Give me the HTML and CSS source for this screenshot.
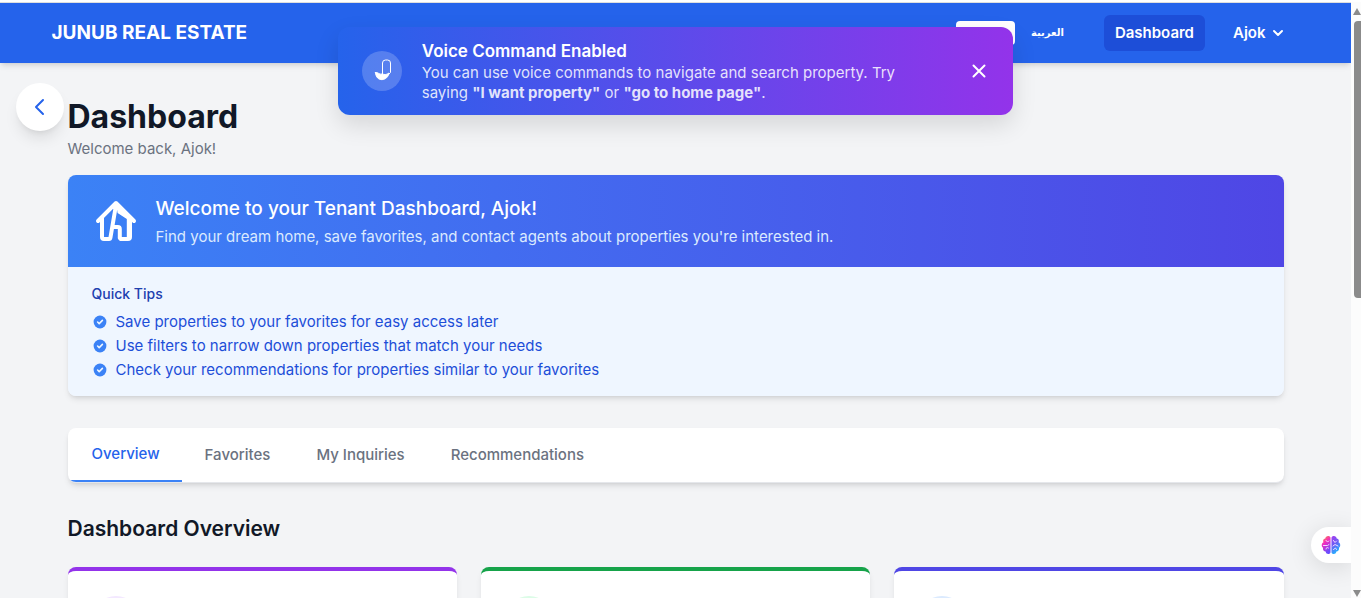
FILE: index.html
```html
<!DOCTYPE html>
<html lang="en">
<head>
<meta charset="utf-8">
<title>Junub Real Estate</title>
<link rel="stylesheet" href="styles.css">
</head>
<body>
<div class="page">
  <header class="topbar">
    <div class="topbar-inner">
      <a class="brand" href="#">JUNUB REAL ESTATE</a>
      <nav class="menu">
        <div class="languages">
          <button class="lang lang-active" type="button" aria-label="English"></button>
          <button class="lang" type="button" lang="ar">العربية</button>
        </div>
        <a class="menu-link" href="#">Dashboard</a>
        <button class="user" type="button">Ajok
          <svg class="chevron" viewBox="0 0 12 12"><path d="M2 4l4 4 4-4"/></svg>
        </button>
      </nav>
    </div>
  </header>

  <main class="content">
    <h1 class="title">Dashboard</h1>
    <p class="subtitle">Welcome back, Ajok!</p>

    <section class="welcome">
      <div class="welcome-head">
        <svg class="house" viewBox="0 0 24 24">
          <path d="M3 12l2-2 7-7 7 7 2 2M5 10v10a1 1 0 0 0 1 1h2.500a.7.7 0 0 0 .7-.6L12 4M13.900 20.500V16a1 1 0 0 0-1-1h-2M13.900 20.500l.5.5H18a1 1 0 0 0 1-1V10"/>
          <path class="house-wall" d="M12 3l9 9-2 1v7.500h-1.600v-9.500L12.800 8z"/>
        </svg>
        <div>
          <h2 class="welcome-title">Welcome to your Tenant Dashboard, Ajok!</h2>
          <p class="welcome-text">Find your dream home, save favorites, and contact agents about properties you're interested in.</p>
        </div>
      </div>
      <div class="tips">
        <h3 class="tips-title">Quick Tips</h3>
        <ul class="tips-list">
          <li><svg class="check" viewBox="0 0 20 20"><circle cx="10" cy="10" r="8"/><path d="M7 10l2 2 4-4"/></svg>Save properties to your favorites for easy access later</li>
          <li><svg class="check" viewBox="0 0 20 20"><circle cx="10" cy="10" r="8"/><path d="M7 10l2 2 4-4"/></svg>Use filters to narrow down properties that match your needs</li>
          <li><svg class="check" viewBox="0 0 20 20"><circle cx="10" cy="10" r="8"/><path d="M7 10l2 2 4-4"/></svg>Check your recommendations for properties similar to your favorites</li>
        </ul>
      </div>
    </section>

    <nav class="tabs">
      <button class="tab tab-active" type="button">Overview</button>
      <button class="tab" type="button">Favorites</button>
      <button class="tab" type="button">My Inquiries</button>
      <button class="tab" type="button">Recommendations</button>
    </nav>

    <h2 class="section-title">Dashboard Overview</h2>
    <div class="cards">
      <div class="card card-purple"><span class="dot"></span></div>
      <div class="card card-green"><span class="dot"></span></div>
      <div class="card card-indigo"><span class="dot"></span></div>
    </div>
  </main>

  <button class="back" type="button" aria-label="Back">
    <svg viewBox="0 0 24 24"><path d="M15 5l-7 7 7 7"/></svg>
  </button>

  <aside class="toast">
    <span class="toast-icon">
      <svg viewBox="0 0 24 24"><path d="M12.500 15V4a3 3 0 0 1 3-3h2a3 3 0 0 1 3 3v9.500l-3 3"/><path class="mic-base" d="M5.500 13.500c3-.5 4 2.500 6 1.500l1-.5c1 1.500 4 1.500 6.500-.5-1 8-13 10-13.500-.5z"/></svg>
    </span>
    <div class="toast-body">
      <h2 class="toast-title">Voice Command Enabled</h2>
      <p class="toast-text">You can use voice commands to navigate and search property. Try saying <b>"I want property"</b> or <b>"go to home page"</b>.</p>
    </div>
    <button class="close" type="button" aria-label="Close">
      <svg viewBox="0 0 20 20"><path d="M4.500 4.500l11 11M15.500 4.500l-11 11"/></svg>
    </button>
  </aside>

  <button class="assistant" type="button" aria-label="Assistant">
    <svg viewBox="0 0 20 20">
      <defs>
        <linearGradient id="left" x1="0" y1="0" x2="0.400" y2="1"><stop offset="0" stop-color="#ff9a2e"/><stop offset="0.450" stop-color="#f22bc0"/><stop offset="1" stop-color="#6a4cff"/></linearGradient>
        <linearGradient id="right" x1="0" y1="0" x2="0.400" y2="1"><stop offset="0" stop-color="#a63cf0"/><stop offset="0.500" stop-color="#6b5cf5"/><stop offset="1" stop-color="#23b4ff"/></linearGradient>
      </defs>
      <path fill="url(#left)" d="M9.500 2.500C8 0 4.500 1 4.300 3.500 2 4 1.800 6 2.500 7.300 0 8.500.5 12 2 12.800c-.5 2.400 1 3.700 2.600 3.700C5 19.500 8.500 19.800 9.500 17.500z"/>
      <path fill="url(#right)" d="M10.500 2.500C12 0 15.500 1 15.700 3.500 18 4 18.200 6 17.500 7.300 20 8.500 19.500 12 18 12.800c.5 2.400-1 3.700-2.600 3.700-.4 3-3.900 3.300-4.900 1z"/>
      <path class="folds" d="M5 5.500c.5 1.500 2 1.500 3 .5M2.500 10.500h4l1.500-1M5 14c0-1.500 1.500-2 2.500-1M12.500 5.500l1.500 2 1.500-1.500M12 11l2-1.500 3 1.500M12.500 14.500l2-1.500 1 1.500"/>
    </svg>
  </button>
</div>
<div class="scrollbar"><span class="arrow-up"></span><span class="thumb"></span><span class="arrow-down"></span></div>
</body>
</html>
```
FILE: styles.css
```css
* { box-sizing: border-box; }
h1, h2, h3, p, ul { margin: 0; padding: 0; }
button { border: 0; padding: 0; background: none; font: inherit; color: inherit; cursor: pointer; }
a { color: inherit; text-decoration: none; }
svg { display: block; fill: none; stroke: currentColor; stroke-linecap: round; stroke-linejoin: round; flex: none; }

body {
  margin: 0;
  height: 100vh;
  overflow: hidden;
  display: flex;
  border-top: 2px solid #fff;
  background: #f3f4f6;
  font-family: Inter, "DejaVu Sans", sans-serif;
  font-size: 15px;
  line-height: 20px;
  color: #111827;
}
.page { position: relative; flex: 1; min-width: 0; overflow: hidden; border-top: 1px solid #dedede; }

.topbar { background: #2563eb; color: #fff; box-shadow: 0 4px 6px -1px rgba(0,0,0,.1), 0 2px 4px -2px rgba(0,0,0,.1); }
.topbar-inner { max-width: 1280px; margin: 0 auto; padding: 12px 16px; display: flex; align-items: center; justify-content: space-between; }
.brand { font-size: 19px; font-weight: 700; line-height: 28px; }
.menu { display: flex; align-items: center; gap: 16px; font-weight: 600; }
.languages { display: flex; align-items: center; margin-right: 8px; }
.lang { height: 24px; padding: 0 16px; font-family: "DejaVu Sans", sans-serif; font-size: 10px; font-weight: 700; }
.lang-active { width: 59px; background: #fff; border-radius: 4px; }
.menu-link { padding: 8px 11px; background: #1d4ed8; border-radius: 6px; }
.user { display: flex; align-items: center; gap: 6px; padding: 8px 16px 8px 12px; }
.chevron { width: 12px; height: 12px; stroke-width: 2; }

.content { max-width: 1280px; margin: 0 auto; padding: 34px 32px 0; }
.title { font-size: 32px; line-height: 40px; font-weight: 700; }
.subtitle { margin-top: 2px; color: #6b7280; }

.welcome { margin-top: 16px; border-radius: 8px; overflow: hidden; box-shadow: 0 4px 6px -1px rgba(0,0,0,.1), 0 2px 4px -2px rgba(0,0,0,.1); }
.welcome-head { display: flex; align-items: center; gap: 16px; padding: 20px 24px; color: #fff; background: linear-gradient(to right, #3b82f6, #4f46e5); }
.house { width: 48px; height: 48px; stroke-width: 2; }
.house-wall { fill: currentColor; stroke: none; }
.welcome-title { font-size: 19px; line-height: 28px; font-weight: 500; }
.welcome-text { margin-top: 4px; color: #dbeafe; }
.tips { padding: 17px 24px 16px; background: #eff6ff; color: #1d4ed8; }
.tips-title { font-size: 14px; font-weight: 500; color: #1e40af; }
.tips-list { list-style: none; margin-top: 8px; display: grid; gap: 4px; }
.tips-list li { display: flex; align-items: center; gap: 8px; }
.check { width: 16px; height: 16px; stroke: #eff6ff; stroke-width: 2; }
.check circle { fill: #3b82f6; stroke: none; }

.tabs { margin-top: 32px; display: flex; background: #fff; border-bottom: 1px solid #e5e7eb; border-radius: 8px; overflow: hidden; box-shadow: 0 4px 6px -1px rgba(0,0,0,.1), 0 2px 4px -2px rgba(0,0,0,.1); }
.tab { padding: 17px 23px; color: #6b7280; font-weight: 500; }
.tab-active { padding: 16px 22px 16px 24px; color: #2563eb; border-bottom: 2px solid #3b82f6; }
.section-title { margin-top: 32px; font-size: 21px; line-height: 28px; font-weight: 600; }

.cards { margin-top: 24px; display: grid; grid-template-columns: repeat(3, 1fr); gap: 24px; }
.card { padding: 25px 24px 24px; background: #fff; border-top: 4px solid; border-radius: 8px; box-shadow: 0 4px 6px -1px rgba(0,0,0,.1); }
.dot { display: block; width: 48px; height: 48px; border-radius: 50%; }
.card-purple { border-color: #9333ea; }
.card-purple .dot { background: #f3e8ff; }
.card-green { border-color: #16a34a; }
.card-green .dot { background: #dcfce7; }
.card-indigo { border-color: #4f46e5; }
.card-indigo .dot { background: #dbeafe; }

.back { position: absolute; left: 16px; top: 80px; width: 48px; height: 48px; display: grid; place-items: center; border-radius: 50%; background: #fff; color: #2563eb; box-shadow: 0 10px 15px -3px rgba(0,0,0,.1), 0 4px 6px -4px rgba(0,0,0,.1); }
.back svg { width: 24px; height: 24px; stroke-width: 2; }

.toast { position: absolute; left: 25%; top: 24px; width: 50%; display: flex; align-items: center; padding: 12px 24px; border-radius: 12px; color: #fff; background: linear-gradient(to right, #2563eb, #9333ea); box-shadow: 0 10px 24px rgba(0,0,0,.12); }
.toast-icon { width: 40px; height: 40px; margin-right: 20px; flex: none; display: grid; place-items: center; border-radius: 50%; background: rgba(255,255,255,.2); }
.toast-icon svg { width: 24px; height: 24px; stroke-width: 1; }
.mic-base { fill: currentColor; }
.toast-body { flex: 1; max-width: 490px; }
.toast-title { font-size: 17px; line-height: 24px; font-weight: 600; }
.toast-text { color: rgba(255,255,255,.85); }
.close { margin-left: auto; }
.close svg { width: 20px; height: 20px; stroke-width: 2; }

.assistant { position: absolute; right: 0; bottom: 35px; height: 36px; padding: 0 10px; display: flex; align-items: center; border-radius: 18px 0 0 18px; background: #fff; box-shadow: 0 4px 24px rgba(0,0,0,.12); }
.assistant svg { width: 20px; height: 20px; stroke: none; }
.assistant .folds { stroke: #f3d9ff; stroke-width: 1; }

.scrollbar { width: 10px; flex: none; display: flex; flex-direction: column; align-items: flex-end; padding: 6px 0 1px; background: #fcfcfc; overflow: hidden; }
.thumb { width: 7px; height: 47%; margin-top: 6px; border-radius: 4px 0 0 4px; background: #8b8b8b; }
.arrow-up, .arrow-down { border: 4px solid transparent; }
.arrow-up { border-top: 0; border-bottom: 7px solid #8b8b8b; }
.arrow-down { margin-top: auto; border-bottom: 0; border-top: 7px solid #8b8b8b; }
```
